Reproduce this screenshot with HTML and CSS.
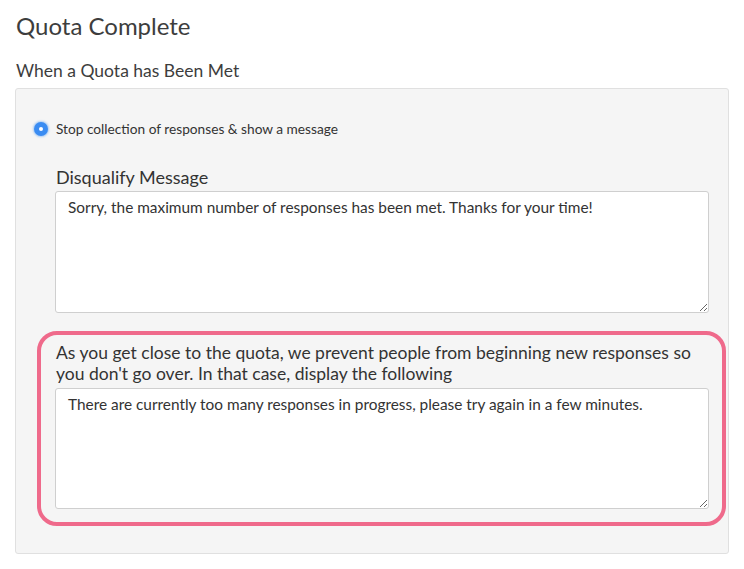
FILE: index.html
```html
<!DOCTYPE html>
<html>
<head>
<meta charset="utf-8">
<link rel="stylesheet" href="styles.css">
</head>
<body>
<h1 class="title">Quota Complete</h1>
<h2 class="subtitle">When a Quota has Been Met</h2>
<div class="panel">
  <label class="radio-row">
    <span class="radio"><span class="radio-dot"></span></span>
    <span class="radio-label">Stop collection of responses &amp; show a message</span>
  </label>
  <div class="messages">
    <div class="field-label">Disqualify Message</div>
    <textarea class="msg msg-first">Sorry, the maximum number of responses has been met. Thanks for your time!</textarea>
    <div class="highlight">
      <div class="field-label field-label-long">As you get close to the quota, we prevent people from beginning new responses so you don't go over. In that case, display the following</div>
      <textarea class="msg msg-second">There are currently too many responses in progress, please try again in a few minutes.</textarea>
    </div>
  </div>
</div>
</body>
</html>
```
FILE: styles.css
```css
* { box-sizing: border-box; }
html, body { margin: 0; padding: 0; background: #ffffff; }
body {
  font-family: Lato, "Open Sans", "Liberation Sans", sans-serif;
  color: #333333;
  width: 744px;
}
.title {
  margin: 11px 0 0 16px;
  font-size: 24px;
  font-weight: 400;
  line-height: 30px;
  color: #3d3d3d;
}
.subtitle {
  margin: 20px 0 0 16px;
  font-size: 17.5px;
  font-weight: 400;
  line-height: 20px;
  color: #3d3d3d;
}
.panel {
  margin: 7px 0 0 15px;
  width: 714px;
  background: #f5f5f5;
  border: 1px solid #e0e0e0;
  border-radius: 3px;
  padding: 31px 0 27px 0;
}
.radio-row {
  display: flex;
  align-items: center;
  gap: 8px;
  padding-left: 18px;
  height: 17px;
}
.radio {
  width: 14px;
  height: 14px;
  border-radius: 50%;
  background: #3a8cf2;
  box-shadow: 0 0 2px 1px rgba(70, 150, 245, 0.45);
  display: flex;
  align-items: center;
  justify-content: center;
}
.radio-dot {
  width: 4px;
  height: 4px;
  border-radius: 50%;
  background: #ffffff;
}
.radio-label {
  font-size: 13.7px;
  line-height: 17px;
  color: #333333;
}
.messages {
  margin: 30px 19px 0 39px;
}
.field-label {
  font-size: 18px;
  line-height: 21px;
  color: #333333;
  padding-left: 1px;
}
.field-label-long {
  font-size: 17.5px;
  line-height: 21px;
}
.msg {
  display: block;
  width: 100%;
  margin: 3px 0 0 0;
  padding: 6px 12px;
  border: 1px solid #cfcfcf;
  border-radius: 3px;
  background: #ffffff;
  font-family: Lato, "Open Sans", "Liberation Sans", sans-serif;
  font-size: 15.4px;
  line-height: 18px;
  color: #333333;
  resize: both;
  outline: none;
}
.msg-first { height: 122px; }
.msg-second { height: 121px; margin-top: 4px; }
.highlight {
  margin: 18px -17px 0 -18px;
  border: 4px solid #ef6a8b;
  border-radius: 20px;
  padding: 7px 13px 13px 14px;
}
```
